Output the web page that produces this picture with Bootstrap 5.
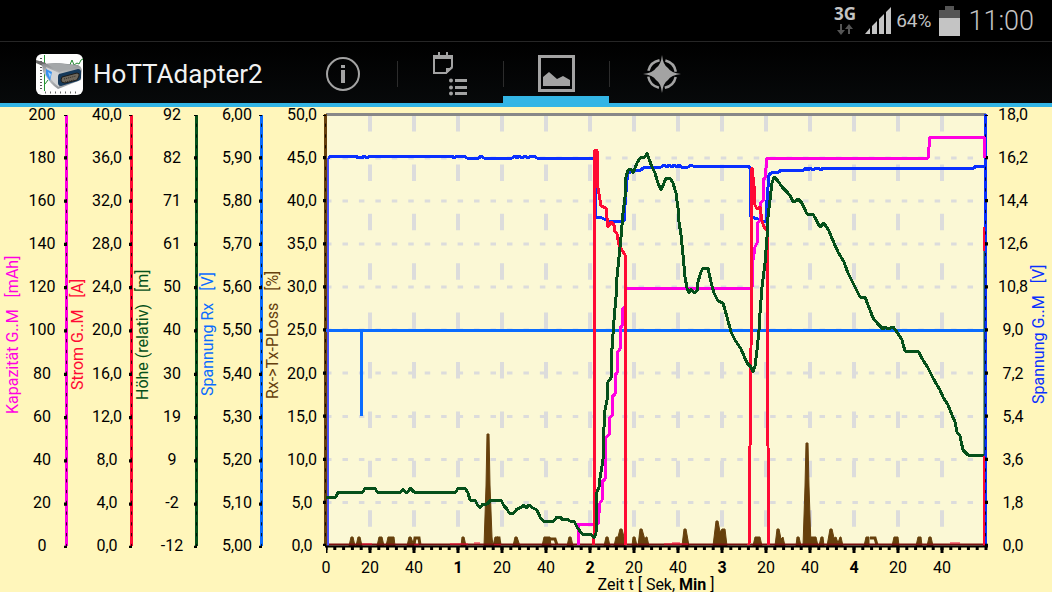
<!DOCTYPE html>
<html lang="de">
<head>
<meta charset="utf-8">
<meta name="viewport" content="width=device-width, initial-scale=1">
<title>HoTTAdapter2</title>
<link href="https://cdn.jsdelivr.net/npm/bootstrap@5.3.0/dist/css/bootstrap.min.css" rel="stylesheet">
<style>
  :root { --accent: #33b5e5; --paper: #fff6bb; --gray: #a3a3a3; }
  body { font-family: Roboto, "Liberation Sans", sans-serif; background: var(--paper); color: #000; }
  svg { display: block; }
  .status-strip { height: 42px; background: #000; color: #c4c4c4; border-bottom: 1px solid #262626; padding-right: 18px; }
  .net-type { font: 700 17px/18px "Noto Sans", sans-serif; }
  .battery-text { font-size: 19px; line-height: 24px; }
  .clock { font-size: 27px; line-height: 30px; font-weight: 300; }
  .app-bar { height: 65px; background: linear-gradient(#000, #07090a); border-bottom: 4px solid var(--accent); }
  .app-brand { width: 291px; padding-left: 36px; padding-top: 3px; gap: 10px; color: #f2f2f2; font-size: 26px; line-height: 32px; }
  .tab-link { width: 106px; color: var(--gray); border-bottom: 7px solid transparent; border-top: 9px solid transparent; }
  .tab-link.active { border-bottom-color: var(--accent); }
  .tab-item + .tab-item { background: linear-gradient(#2c2c2c, #2c2c2c) left 19px / 1px 26px no-repeat; }
  .chart { font-size: 16px; line-height: 16px; padding-left: 3px; }
  .axis { width: 65px; margin-bottom: 38px; }
  .axis-last { width: 63px; }
  .axis-title { width: 20px; line-height: 20px; padding-bottom: 8px; writing-mode: vertical-rl; transform: rotate(180deg); white-space: pre; }
  .scale { width: 38px; }
  .rail { width: 7px; padding: 8px 0; }
  .rail svg, .plot svg { width: 100%; height: 100%; overflow: visible; }
  .axis-right { width: 66px; padding-left: 11px; }
  .axis-right .scale { width: 32px; }
  .plot { padding: 8px 0; min-height: 0; }
  .time-scale { height: 20px; line-height: 20px; padding-top: 4px; margin: 0 22px 0 -22px; }
  .time-title { height: 18px; line-height: 14px; padding-top: 4px; }
  .time-scale b, .time-title b { font-weight: 700; }
  .tick-major { stroke: #000; stroke-width: 3; stroke-dasharray: 3 37; stroke-dashoffset: 2; }
  .tick-minor { stroke: #000; stroke-width: 1; stroke-dasharray: 3 7; stroke-dashoffset: 2; opacity: .8; }
  .series { fill: none; stroke-width: 3; stroke-linejoin: round; shape-rendering: crispEdges; }
  .series-thin { stroke-width: 2; }
  .c-cap { color: #ff00e1; } .c-cur { color: #ff0a34; } .c-alt { color: #05501a; }
  .c-rx { color: #0a6cff; } .c-loss { color: #66400c; } .c-volt { color: #0a30ff; }
</style>
</head>
<body class="vh-100 d-flex flex-column overflow-hidden">

<header class="status-strip d-flex justify-content-end align-items-center flex-shrink-0">
  <div class="d-flex flex-column align-items-center me-2">
    <span class="net-type">3G</span>
    <svg width="16" height="13" viewBox="0 0 16 13" fill="#555"><path d="M0 7h3V1h2v6h3l-4 5zM8 6l4-5 4 5h-3v5h-2V6z"/></svg>
  </div>
  <svg class="me-1" width="28" height="28" viewBox="0 0 28 28" fill="#c4c4c4"><path d="M1 27l5-6v6zM8 27v-8l5-5v13zM15 27V12l5-5v20zM22 27V5l5-5v27z"/></svg>
  <span class="battery-text me-2">64%</span>
  <svg class="me-2" width="21" height="30" viewBox="0 0 21 30"><path d="M0 4h6V0h9v4h6v8H0z" fill="#555"/><path d="M0 12h21v18H0z" fill="#c4c4c4"/></svg>
  <span class="clock">11:00</span>
</header>

<nav class="app-bar d-flex flex-shrink-0" aria-label="Ansichten">
  <div class="app-brand d-flex align-items-center flex-shrink-0">
    <svg width="47" height="41" viewBox="0 0 47 41" aria-hidden="true">
      <defs>
        <linearGradient id="metal" x1="0" y1="0" x2="0" y2="1"><stop offset="0" stop-color="#85888b"/><stop offset=".5" stop-color="#c9cbcd"/><stop offset="1" stop-color="#8f9296"/></linearGradient>
      </defs>
      <rect width="47" height="41" rx="6" fill="#fdfdfd"/>
      <path d="M5 4v32" stroke="#555" stroke-width="2" stroke-dasharray="1 2"/>
      <path d="M9 38.500h34" stroke="#666" stroke-width="2" stroke-dasharray="1 4"/>
      <path d="M8.500 1v36" stroke="#259534"/>
      <path d="M9 30l3-4M33 13l3-7 2 5 3-2 2 1 2-4 2-1" stroke="#238a31" fill="none"/>
      <path d="M0 6l10 3-1 4-9-4z" fill="#6a6a6a"/>
      <path d="M6 10l15-1 21 2q4 2 4 6l-1 9-23 9q-7-4-15-17z" fill="url(#metal)"/>
      <path d="M11 10l11-1 20 3-19 6z" fill="#a4a7a9"/>
      <path d="M10 13l13 6v14q-6-4-10-11z" fill="#d2d4d6"/>
      <path d="M23 20l19-5q3 0 3 3v6q0 2-3 3l-17 5q-3 0-3-3v-6q0-2 1-3z" fill="#16395a"/>
      <path d="M26 23l15-4q3 0 2 3l-2 4-12 3q-4 0-4-3z" fill="#6f685c" stroke="#1d1b19"/>
      <path d="M28 25l12-3M29 28l9-2" stroke="#2d2a26" stroke-width="1" stroke-dasharray="1 1"/>
      <path d="M10 15l6 3-2 9-4-6z" fill="#3a92f0"/><path d="M12 18l3 2-1 4z" fill="#a8d8ff"/>
    </svg>
    <span>HoTTAdapter2</span>
  </div>
  <ul class="list-unstyled d-flex mb-0">
    <li class="tab-item d-flex"><a class="tab-link d-flex align-items-center justify-content-center" href="#info" aria-label="Info">
      <svg width="36" height="36" viewBox="0 0 36 36" fill="currentColor"><circle cx="17" cy="18" r="16" fill="none" stroke="currentColor" stroke-width="2"/><path d="M15 14h4v13h-4zM15 9h4v3h-4z"/></svg></a></li>
    <li class="tab-item d-flex"><a class="tab-link d-flex align-items-center justify-content-center" href="#log" aria-label="Protokoll">
      <svg width="36" height="46" viewBox="0 0 36 46" fill="currentColor"><path d="M1 4h20v4H1zM6 1h2v4H6zM14 1h2v4h-2z"/><path d="M2 6v16h12l6-6V6" fill="none" stroke="currentColor" stroke-width="2"/><path d="M14 23v-6h7z"/><path d="M23 28h12v3H23zM23 35h12v3H23zM23 41h12v3H23z"/><circle cx="19" cy="29.500" r="2"/><circle cx="19" cy="36.500" r="2"/><circle cx="19" cy="42.500" r="2"/></svg></a></li>
    <li class="tab-item d-flex"><a class="tab-link active d-flex align-items-center justify-content-center" href="#chart" aria-label="Diagramm" aria-current="page">
      <svg width="37" height="37" viewBox="0 0 37 37" fill="currentColor"><path d="M1.500 1.500h34v34h-34z" fill="none" stroke="currentColor" stroke-width="3"/><path d="M5 31v-9l6-5 8 7 6-3 7 4v6z"/></svg></a></li>
    <li class="tab-item d-flex"><a class="tab-link d-flex align-items-center justify-content-center" href="#map" aria-label="Kompass">
      <svg width="38" height="38" viewBox="0 0 38 38" fill="currentColor"><circle cx="19" cy="19" r="14" fill="none" stroke="currentColor" stroke-width="2.500" stroke-dasharray="16 6" stroke-dashoffset="-3"/><path d="M19 0q1 10 6 13 3 5 13 6-10 1-13 6-5 3-6 13-1-10-6-13-3-5-13-6 10-1 13-6 5-3 6-13z"/></svg></a></li>
  </ul>
</nav>

<main class="chart d-flex flex-fill">
  <section class="axis d-flex flex-shrink-0">
    <div class="axis-title c-cap text-center">Kapazität G..M   [mAh]</div>
    <div class="scale d-flex flex-column justify-content-between text-center"><span>200</span><span>180</span><span>160</span><span>140</span><span>120</span><span>100</span><span>80</span><span>60</span><span>40</span><span>20</span><span>0</span></div>
    <div class="rail c-cap"><svg viewBox="0 0 7 431" preserveAspectRatio="none"><path d="M5.500 0V431" stroke="currentColor" stroke-width="3"/><path class="tick-minor" pathLength="400" d="M5.500 0V431"/><path class="tick-major" pathLength="400" d="M4.500 0V433"/></svg></div>
  </section>
  <section class="axis d-flex flex-shrink-0">
    <div class="axis-title c-cur text-center">Strom G..M   [A]</div>
    <div class="scale d-flex flex-column justify-content-between text-center"><span>40,0</span><span>36,0</span><span>32,0</span><span>28,0</span><span>24,0</span><span>20,0</span><span>16,0</span><span>12,0</span><span>8,0</span><span>4,0</span><span>0,0</span></div>
    <div class="rail c-cur"><svg viewBox="0 0 7 431" preserveAspectRatio="none"><path d="M5.500 0V431" stroke="currentColor" stroke-width="3"/><path class="tick-minor" pathLength="400" d="M5.500 0V431"/><path class="tick-major" pathLength="400" d="M4.500 0V433"/></svg></div>
  </section>
  <section class="axis d-flex flex-shrink-0">
    <div class="axis-title c-alt text-center">Höhe (relativ)   [m]</div>
    <div class="scale d-flex flex-column justify-content-between text-center"><span>92</span><span>82</span><span>71</span><span>61</span><span>50</span><span>40</span><span>30</span><span>19</span><span>9</span><span>-2</span><span>-12</span></div>
    <div class="rail c-alt"><svg viewBox="0 0 7 431" preserveAspectRatio="none"><path d="M5.500 0V431" stroke="currentColor" stroke-width="3"/><path class="tick-minor" pathLength="400" d="M5.500 0V431"/><path class="tick-major" pathLength="400" d="M4.500 0V433"/></svg></div>
  </section>
  <section class="axis d-flex flex-shrink-0">
    <div class="axis-title c-rx text-center">Spannung Rx   [V]</div>
    <div class="scale d-flex flex-column justify-content-between text-center"><span>6,00</span><span>5,90</span><span>5,80</span><span>5,70</span><span>5,60</span><span>5,50</span><span>5,40</span><span>5,30</span><span>5,20</span><span>5,10</span><span>5,00</span></div>
    <div class="rail c-rx"><svg viewBox="0 0 7 431" preserveAspectRatio="none"><path d="M5.500 0V431" stroke="currentColor" stroke-width="3"/><path class="tick-minor" pathLength="400" d="M5.500 0V431"/><path class="tick-major" pathLength="400" d="M4.500 0V433"/></svg></div>
  </section>
  <section class="axis axis-last d-flex flex-shrink-0">
    <div class="axis-title c-loss text-center">Rx-&gt;Tx-PLoss   [%]</div>
    <div class="scale d-flex flex-column justify-content-between text-center"><span>50,0</span><span>45,0</span><span>40,0</span><span>35,0</span><span>30,0</span><span>25,0</span><span>20,0</span><span>15,0</span><span>10,0</span><span>5,0</span><span>0,0</span></div>
  </section>

  <div class="d-flex flex-column flex-fill">
    <div class="plot flex-fill">
      <svg viewBox="326 115 660 431" preserveAspectRatio="none" role="img" aria-label="Telemetriedaten über der Zeit">
        <rect x="326" y="115" width="660" height="431" fill="#fbf8d5"/>
        <g stroke="#dcdcdc" fill="none">
          <path stroke-width="4" stroke-dasharray="16.500 32.900" d="M370 115V546M414 115V546M458 115V546M502 115V546M546 115V546M590 115V546M634 115V546M678 115V546M722 115V546M766 115V546M810 115V546M854 115V546M898 115V546M942 115V546"/>
          <path stroke-width="3" stroke-dasharray="5.500 10.950" d="M326 158H986M326 201H986M326 244H986M326 287H986M326 330H986M326 373H986M326 416.500H986M326 459.500H986M326 502.500H986"/>
        </g>
        <path d="M326 114.500H986" stroke="#888" stroke-width="3"/>
        <!-- right and left value rails -->
        <path class="c-volt" d="M985.500 114V546" stroke="currentColor" stroke-width="3"/>
        <path class="c-loss" d="M325.500 114V546" stroke="currentColor" stroke-width="3"/>
        <path class="tick-minor" pathLength="400" d="M325.500 115V546"/><path class="tick-major" pathLength="400" d="M324.500 115V546"/>
        <path class="tick-minor" pathLength="400" d="M985.500 115V546"/><path class="tick-major" pathLength="400" d="M986.500 115V546"/>
        <!-- packet loss -->
        <g class="c-loss" fill="currentColor" stroke="currentColor">
          <path d="M349 546l2-9h2l2 9zM356 546l2-9h2l2 9zM377 546l2-9h3l2 9zM386 546l2-9h6l1 9zM407 546l2-9h2l3 9zM461 546l1-9h2l2 9zM493 546l2-9h3l2 9zM513 546l2-9h2l3 9zM542 546l2-9h6l1 9zM567 546l2-9h2l2 9zM604 546l2-9h2l2 9zM614 546l2-9h2l2-8h2l2 8 1 9zM632 546l1-9h2l2 9zM638 546l2-17h2l3 11 1-3h1l2 9zM682 546l2-17h2l3 17zM713 546l3-25h2l2 11 2-3h3l2 17zM753 546l2-9h5l2 9zM775 546l2-17h2l2 10 2-2 2 9zM796 546l1-9h2l2 9zM809 546l2-9h5l2 9zM819 546l2-9h2l1 9zM827 546l3-17h2l2 9 2-1 2 6 2-6h1l2 9zM864 546l2-9h3v9zM892 546l2-9h4l1 9zM916 546l2-9h3l1 9zM927 546l2-9h2l2 9z"/>
          <path d="M484 546l2-60 1-52h2l1 51 2 52 1 9zM803 546l2-60 1-43h2l1 43 2 60z"/>
          <path fill="none" stroke-width="3" d="M414 545l1-7h4l1 7M550 539h5l2 6M870 538h5l2 7M497 538h2l1 7"/>
        </g>
        <path d="M327 544.500H984" stroke="#7c0f10" stroke-width="2"/>
        <path d="M362 544h10M450 544h18M474 543h6M672 543h8M950 543h10M664 544h24M494 545h7M414 545h5" stroke="#f00a34" stroke-width="1"/>
        <!-- receiver voltage -->
        <path class="series c-rx" stroke="currentColor" d="M326 330.500H985M361.500 330V416"/>
        <path d="M328 546V158" class="series series-thin" stroke="#4a50f5"/>
        <!-- drive voltage -->
        <path class="series c-volt" stroke="currentColor" d="M328 158L331 156H356L358 158 360 157 362 158 364 156 367 158 370 156H452L454 158 457 156H464L467 158H479L481 156 484 158H512L515 156 517 158 519 156 522 158 525 156 528 158 531 156H534L537 158H594L596 217 602 218 608 221H624L625 205 627 180 628 173 634 171 641 170 643 168 661 167 664 165 667 167 669 165 672 167 674 165 677 167 679 165 681 167H688L691 165 693 166H748L750 168 751 217 758 219 762 221H766L767 200 769 175 771 173 779 172 781 170H804L806 168 808 170 810 168 813 170 816 168H818L821 170 823 168H974L976 166H984"/>
        <!-- capacity -->
        <path class="series c-cap" stroke="currentColor" d="M578 545V524H598L600 503 602 500V482L605 479V458L606 437 609 435V418L612 416V397L615 394V375L617 373V353L620 349V328L622 326V310L625 307V288H752L753 260 755 247 757 243V223L760 221V203L763 201V180L765 178 767 158H928L930 137H984V158"/>
        <!-- current -->
        <path class="series c-cur" stroke="currentColor" d="M594 545L595 150H597L598 188 601 206 606 208 608 227 611 222 614 225V230L617 234 619 245 622 250 625 255V340L626 545M749 545L751 350 752 168 754 186 755 205 757 209 760 207 762 221 764 227 767 230V352L768 446 769 545"/>
        <!-- altitude -->
        <path class="series c-alt" stroke="currentColor" d="M326 497H336L338 492H363L365 488H375L377 492H401L403 489 405 492H408L410 488 414 492H456L458 488H465L468 493 470 500H475L478 506H479L480 508 483 504H487L491 500H501L504 506 507 509 509 513H514L517 509 522 507 524 505 526 508 529 505 533 508 537 510 540 517 543 521H554L557 517H560L563 520 567 519 570 521H574L577 527 582 534H591L594 538 596 533 597 492 599 487 600 478 603 460 604 427 605 410 607 400 608 382 611 378V349H612L614 320 616 297 617 277 619 257 621 237 623 213 625 197 626 177 628 170 631 169 633 173 637 163 640 158 645 157 647 153 649 159 652 167 655 173 658 183 661 190 664 183 666 178H670L673 183 676 193 678 208 679 222 681 235 683 255 685 277 687 288 689 293 691 289 694 293 697 291 698 282 701 272 703 268H708L711 282 714 293 718 301 723 303 727 317 731 332 735 340 741 349 747 363 751 367 753 372 755 366 757 350 759 330 760 313 762 287 765 263 767 237 768 217 770 200 772 183 774 177 778 181 782 187 787 192 791 197 793 202 796 201 798 199 802 203 807 214H813L820 227 824 223 829 231 834 243 838 252 844 262 848 273 853 283 860 297H865L870 310 873 318 878 324 883 329 885 327 888 329 893 327 897 332 902 340 905 351H918L923 360 928 368 933 378 937 385 940 390 943 397 948 405 952 415 955 422 957 432 960 436 963 450 968 455H984"/>
        <path d="M984 251V455" class="c-alt" stroke="currentColor"/>
        <path d="M984 227v24M984 456v90" class="c-cur" stroke="currentColor" stroke-width="2"/>
        <!-- time axis ticks -->
        <path d="M325 546.500H988" stroke="#000" stroke-width="2"/>
        <path d="M326 548H988" pathLength="662" stroke="#000" stroke-width="4" stroke-dasharray="3 5.800" stroke-dashoffset="1.500"/>
        <path d="M326 549.500H980" pathLength="654" stroke="#000" stroke-width="7" stroke-dasharray="3 41" stroke-dashoffset="1.500"/>
      </svg>
    </div>
    <div class="time-scale d-flex text-center flex-shrink-0">
      <span class="w-100">0</span><span class="w-100">20</span><span class="w-100">40</span><b class="w-100">1</b><span class="w-100">20</span><span class="w-100">40</span><b class="w-100">2</b><span class="w-100">20</span><span class="w-100">40</span><b class="w-100">3</b><span class="w-100">20</span><span class="w-100">40</span><b class="w-100">4</b><span class="w-100">20</span><span class="w-100">40</span>
    </div>
    <div class="time-title text-center flex-shrink-0">Zeit t [ Sek, <b>Min</b> ]</div>
  </div>

  <section class="axis axis-right d-flex flex-shrink-0">
    <div class="scale d-flex flex-column justify-content-between text-center"><span>18,0</span><span>16,2</span><span>14,4</span><span>12,6</span><span>10,8</span><span>9,0</span><span>7,2</span><span>5,4</span><span>3,6</span><span>1,8</span><span>0,0</span></div>
    <div class="axis-title c-volt text-center">Spannung G..M   [V]</div>
  </section>
</main>

<script src="https://cdn.jsdelivr.net/npm/bootstrap@5.3.0/dist/js/bootstrap.bundle.min.js"></script>
</body>
</html>
